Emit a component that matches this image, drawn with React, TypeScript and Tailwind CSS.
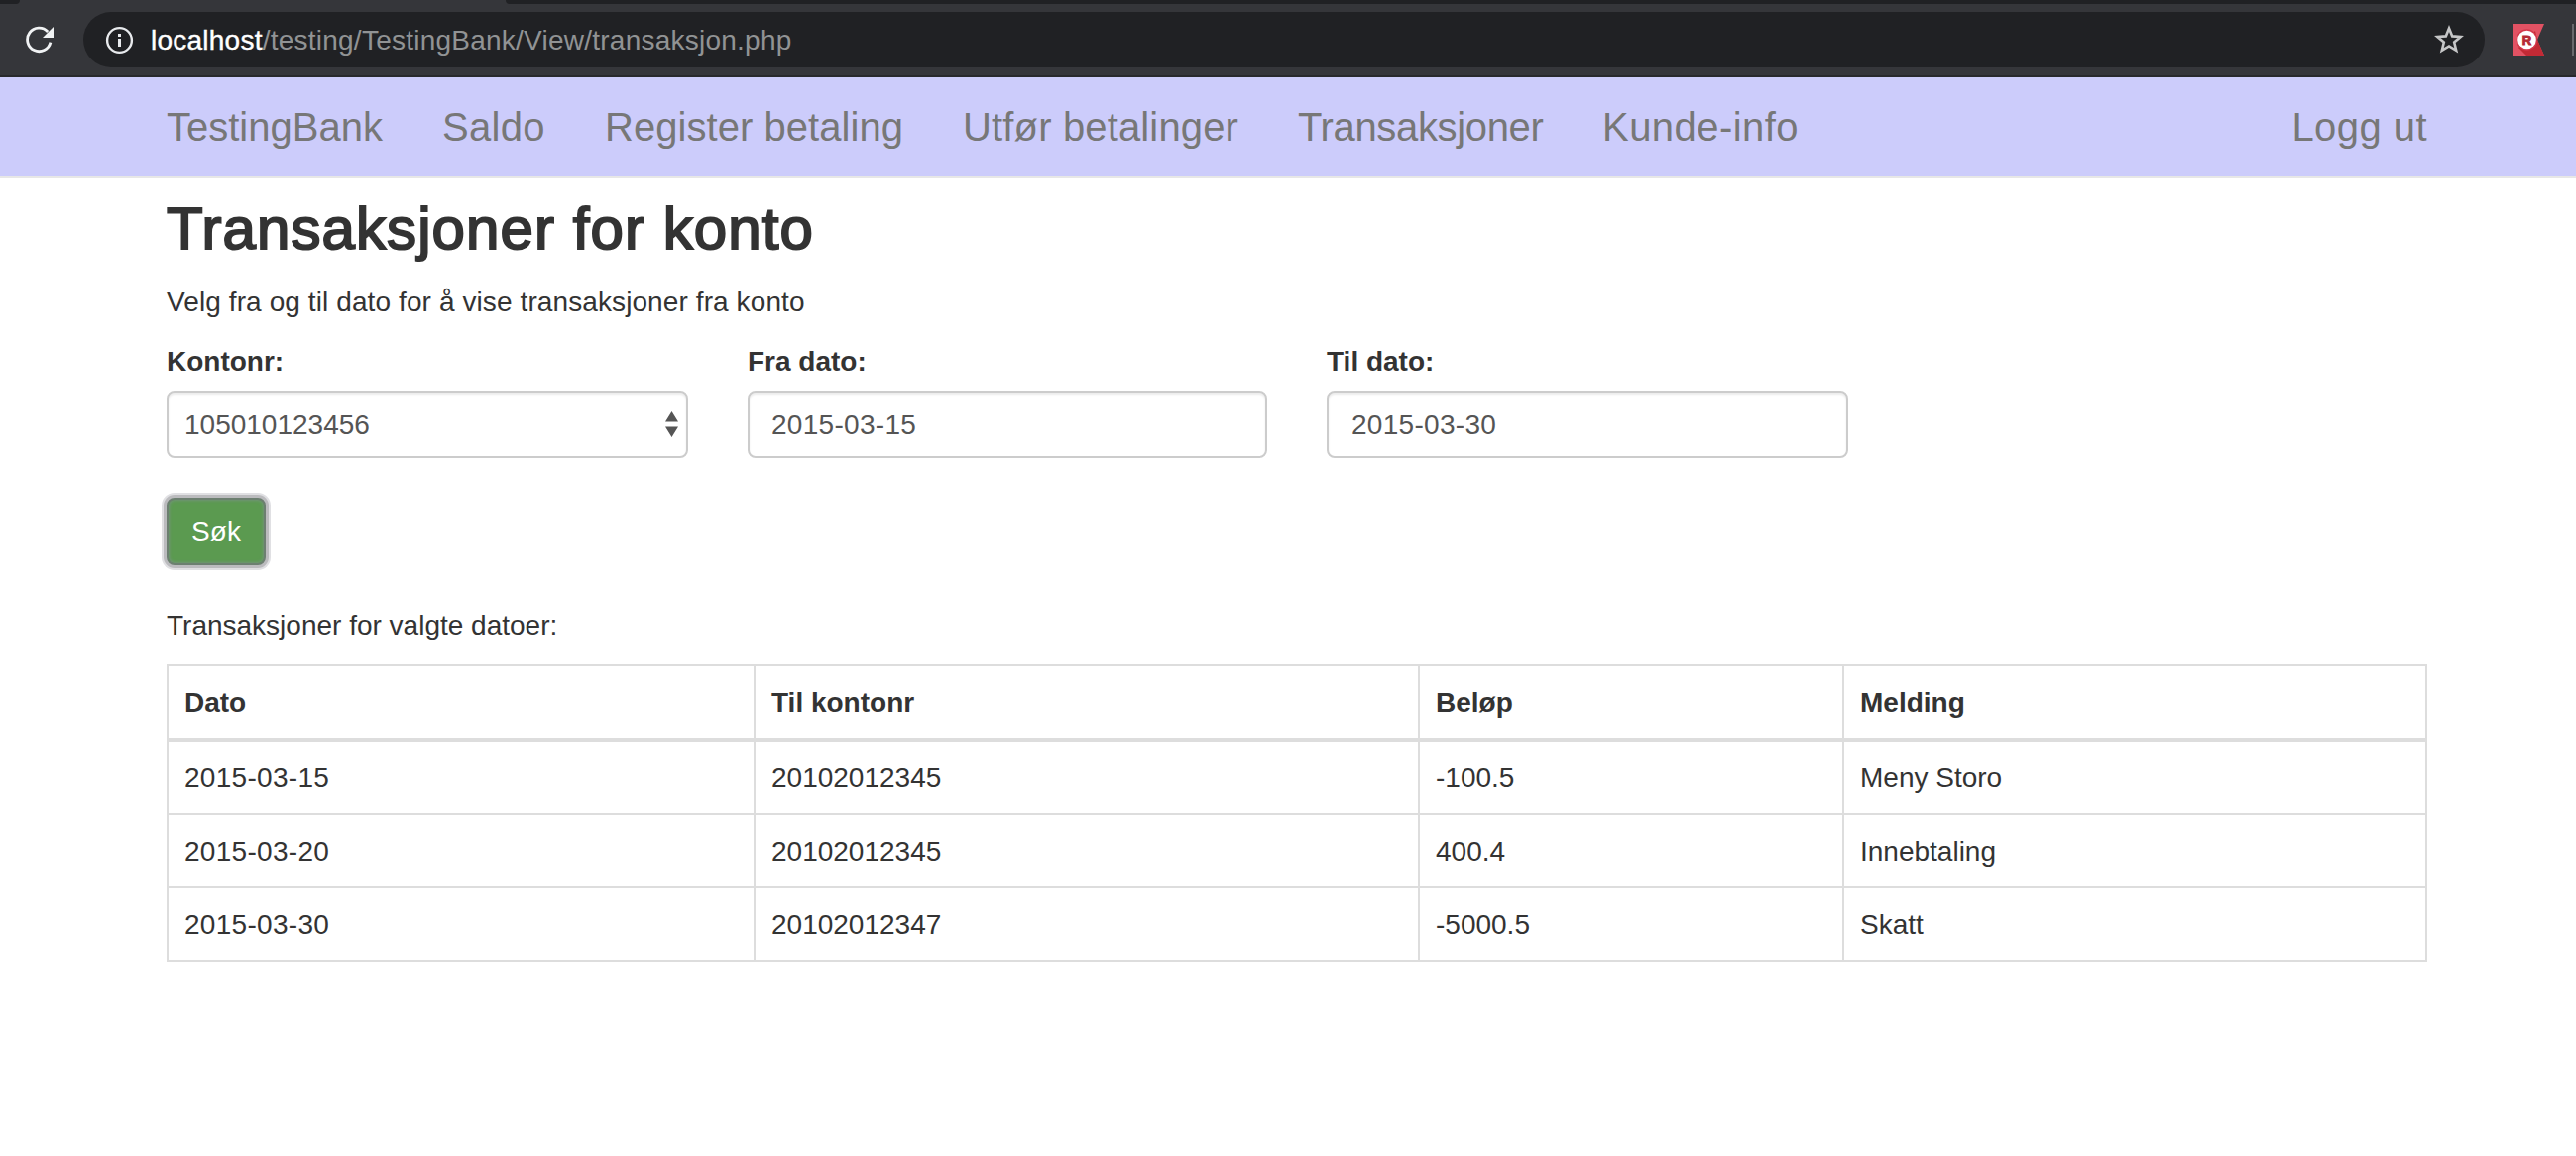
import React from "react";

const links = [
  { label: "TestingBank", cls: "w-[218px]" },
  { label: "Saldo", cls: "w-[104px] tracking-[0.3px]" },
  { label: "Register betaling", cls: "w-[301px] tracking-[0.05px]" },
  { label: "Utfør betalinger", cls: "w-[278px] tracking-[0.15px]" },
  { label: "Transaksjoner", cls: "w-[247px] tracking-[-0.35px]" },
  { label: "Kunde-info", cls: "w-[198px] tracking-[0.45px]" },
];

const rows = [
  ["2015-03-15", "20102012345", "-100.5", "Meny Storo"],
  ["2015-03-20", "20102012345", "400.4", "Innebtaling"],
  ["2015-03-30", "20102012347", "-5000.5", "Skatt"],
];

const control =
  "flex h-[68px] w-full items-center rounded-lg border-2 border-[#ccc] bg-white text-[#555] shadow-[inset_0_2px_2px_rgba(0,0,0,0.075)]";

function BrowserBar() {
  return (
    <header>
      <div className="flex h-1 justify-between overflow-hidden bg-[#35363a]">
        <div className="h-1 w-5 rounded-br-lg bg-[#202124]" />
        <div className="h-1 w-[2088px] rounded-bl-lg bg-[#202124]" />
      </div>
      <div className="flex h-[74px] items-center border-b-2 border-[#28292c] bg-[#35363a]">
        <div className="flex w-[84px] shrink-0 pl-[26px]">
          <svg width="29" height="28" viewBox="0 0 29 28" fill="none">
            <path d="M24.9 16.6A11.8 11.8 0 1 1 22.2 6" stroke="#f1f3f4" strokeWidth="2.8" />
            <path d="M28 1v11H17z" fill="#f1f3f4" />
          </svg>
        </div>
        <div className="flex h-14 w-[2422px] items-center rounded-full bg-[#202124] pl-[22px] pr-5">
          <svg width="29" height="29" viewBox="0 0 29 29" fill="none">
            <circle cx="14.5" cy="14.5" r="12.4" stroke="#e8eaed" strokeWidth="2.4" />
            <path d="M13 8h3v3h-3zM13 13h3v8h-3z" fill="#e8eaed" />
          </svg>
          <div className="ml-[17px] flex-1 pt-0.5 text-[28px] leading-10 tracking-[0.24px] text-[#919394]">
            <span className="text-white [-webkit-text-stroke:0.4px_#fff]">localhost</span>
            <span>/testing/TestingBank/View/transaksjon.php</span>
          </div>
          <svg width="32" height="32" viewBox="0 0 32 32" fill="none">
            <path
              d="M16 4.4l3.2 8 8.5.6-6.5 5.5 2 8.3L16 22.4l-7.2 4.4 2-8.3L4.3 13l8.5-.6z"
              stroke="#c5c6c7"
              strokeWidth="2.6"
            />
          </svg>
        </div>
        <svg className="ml-7" width="32" height="32" viewBox="0 0 32 32">
          <path d="M0 0h32l-7 16 7 16H0z" fill="#e25263" />
          <path d="M6 24l17-17 2 9 7 16H14z" fill="#c22a35" />
          <circle cx="14.5" cy="16" r="10.7" fill="#d3384a" />
          <circle cx="14.5" cy="16" r="9.3" fill="#fff" />
          <text x="14.5" y="21" textAnchor="middle" fontSize="13" fontWeight="bold" fill="#b52b34" stroke="#b52b34" strokeWidth="1">R</text>
        </svg>
        <div className="ml-7 h-8 w-0.5 bg-[#68696c]" />
      </div>
    </header>
  );
}

function Field({ label, width, children }: { label: string; width: string; children: React.ReactNode }) {
  return (
    <div className={`flex flex-col gap-2 ${width}`}>
      <label className="block font-bold leading-[42px]">{label}</label>
      {children}
    </div>
  );
}

export default function App() {
  return (
    <div className="min-h-[1166px] w-[2598px] overflow-hidden bg-white font-['Liberation_Sans',Arial,sans-serif] text-[28px] leading-10 text-[#333]">
      <BrowserBar />
      <nav className="flex h-[102px] items-center justify-between border-b-2 border-[#e7e7e7] bg-[#ccccfb] pl-[168px] pr-[150px] text-[40px] text-[#777]">
        <div className="flex gap-[60px]">
          {links.map((l) => (
            <a key={l.label} className={`whitespace-nowrap ${l.cls}`}>{l.label}</a>
          ))}
        </div>
        <a className="whitespace-nowrap tracking-[0.45px]">Logg ut</a>
      </nav>
      <main className="flex w-[2448px] flex-col pl-[168px] pt-[18px]">
        <h2 className="text-[60px] leading-[66px] tracking-[1.08px] [-webkit-text-stroke:2px_#333]">
          Transaksjoner for konto
        </h2>
        <p className="mt-5 leading-[42px] tracking-[0.1px]">Velg fra og til dato for å vise transaksjoner fra konto</p>
        <div className="mt-[18px] flex gap-[60px]">
          <Field label="Kontonr:" width="w-[526px]">
            <div className={`${control} justify-between pl-4 pr-2`}>
              <span className="pt-0.5">105010123456</span>
              <svg width="13" height="26" viewBox="0 0 13 26" fill="#555">
                <path d="M6.5 0L13 10.5H0zM6.5 26L13 15.5H0z" />
              </svg>
            </div>
          </Field>
          <Field label="Fra dato:" width="w-[524px]">
            <div className={`${control} px-[22px] pt-0.5 tracking-[0.3px]`}>2015-03-15</div>
          </Field>
          <Field label="Til dato:" width="w-[526px]">
            <div className={`${control} px-[23px] pt-0.5 tracking-[0.3px]`}>2015-03-30</div>
          </Field>
        </div>
        <button className="mt-10 flex h-[68px] w-[100px] items-center justify-center rounded-lg border-2 border-[#6c7f70] bg-[#5b9a50] pt-0.5 text-white shadow-[0_0_0_3px_#bbbbbe,0_0_0_5px_#e0e0e3,inset_0_0_3px_1px_#729478]">
          Søk
        </button>
        <p className="mt-10 leading-[42px]">Transaksjoner for valgte datoer:</p>
        <table className="mt-[18px] w-[2278px] table-fixed border-collapse text-left">
          <colgroup>
            <col className="w-[592px]" />
            <col className="w-[670px]" />
            <col className="w-[428px]" />
            <col className="w-[588px]" />
          </colgroup>
          <thead>
            <tr>
              {["Dato", "Til kontonr", "Beløp", "Melding"].map((h) => (
                <th key={h} className="border-2 border-b-4 border-[#ddd] px-4 pb-[15px] pt-[17px] font-bold">{h}</th>
              ))}
            </tr>
          </thead>
          <tbody>
            {rows.map((r) => (
              <tr key={r[0]}>
                {r.map((c, i) => (
                  <td
                    key={i}
                    className={`border-2 border-[#ddd] px-4 pb-[15px] pt-[17px] ${i === 0 ? "tracking-[0.3px]" : ""}`}
                  >
                    {c}
                  </td>
                ))}
              </tr>
            ))}
          </tbody>
        </table>
      </main>
    </div>
  );
}
